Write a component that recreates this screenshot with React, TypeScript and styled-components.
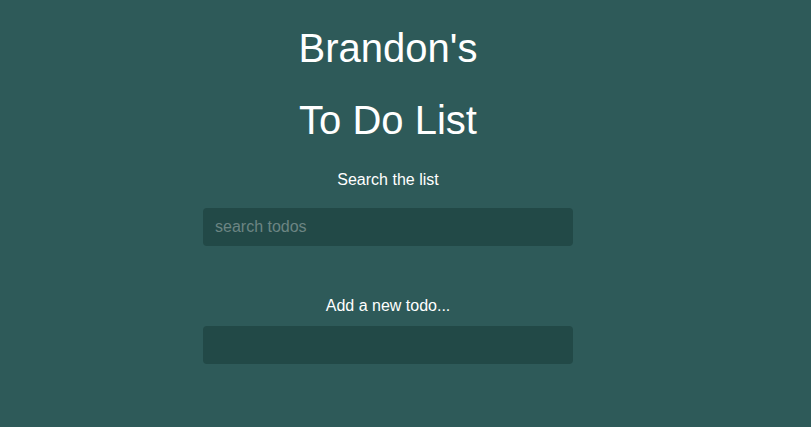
import styled, { createGlobalStyle } from "styled-components";

const GlobalStyle = createGlobalStyle`
  html, body {
    margin: 0;
    padding: 0;
    background-color: #2e5a59;
    font-family: "Liberation Sans", Arial, sans-serif;
    color: #ffffff;
  }
`;

const Page = styled.div`
  min-height: 427px;
  padding: 25px 35px 0 0;
  display: flex;
  flex-direction: column;
  align-items: center;
  box-sizing: border-box;
`;

const Title = styled.h1<{ $gap?: number }>`
  margin: ${(p) => p.$gap ?? 0}px 0 0;
  font-size: 40px;
  line-height: 46px;
  font-weight: 400;
  text-align: center;
`;

const Label = styled.label<{ $gap: number }>`
  margin-top: ${(p) => p.$gap}px;
  font-size: 16px;
  line-height: 18px;
  text-align: center;
`;

const Field = styled.input<{ $gap: number }>`
  margin-top: ${(p) => p.$gap}px;
  width: 370px;
  height: 38px;
  box-sizing: border-box;
  padding: 0 12px;
  border: none;
  border-radius: 4px;
  background-color: #224947;
  color: #ffffff;
  font-family: "Liberation Sans", Arial, sans-serif;
  font-size: 16px;
  outline: none;

  &::placeholder {
    color: #6c8583;
  }
`;

export default function App() {
  return (
    <>
      <GlobalStyle />
      <Page>
        <Title>Brandon's</Title>
        <Title $gap={26}>To Do List</Title>
        <Label $gap={28} htmlFor="search">Search the list</Label>
        <Field $gap={19} id="search" placeholder="search todos" />
        <Label $gap={51} htmlFor="add">Add a new todo...</Label>
        <Field $gap={11} id="add" />
      </Page>
    </>
  );
}
